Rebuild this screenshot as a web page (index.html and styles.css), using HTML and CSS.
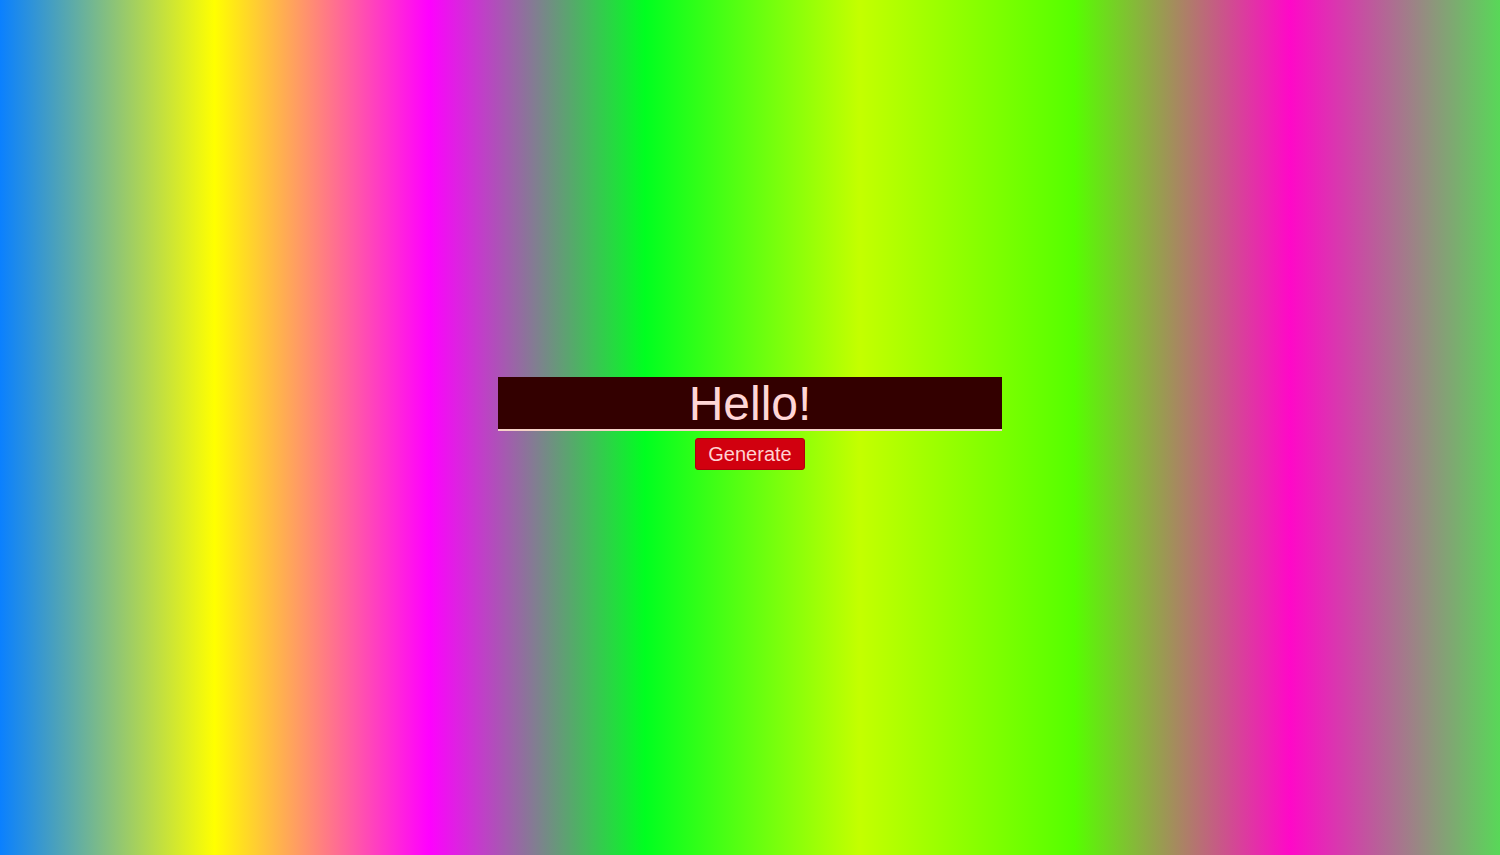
FILE: index.html
```html
<!DOCTYPE html>
<html>
<head>
<meta charset="utf-8">
<link rel="stylesheet" href="styles.css">
</head>
<body>
<main class="stage">
  <div class="panel">
    <input class="word" type="text" value="Hello!">
    <button class="generate" type="button">Generate</button>
  </div>
</main>
</body>
</html>
```
FILE: styles.css
```css
html, body {
  margin: 0;
  padding: 0;
  height: 100%;
}
body {
  font-family: "Liberation Sans", Arial, sans-serif;
  background: linear-gradient(to right,
    #0a80ff 0%,
    #ffff00 14.3%,
    #ff00ff 28.6%,
    #00ff20 43%,
    #c4ff00 57.3%,
    #55ff00 71.6%,
    #ff08c8 86%,
    #58d858 100%);
}
.stage {
  height: 100vh;
  display: flex;
  align-items: center;
  justify-content: center;
  box-sizing: border-box;
  padding-bottom: 8px;
}
.panel {
  display: flex;
  flex-direction: column;
  align-items: center;
  gap: 7px;
}
.word {
  width: 504px;
  height: 54px;
  box-sizing: border-box;
  background: #330000;
  color: #ffd6d6;
  border: none;
  border-bottom: 2px solid #f6d2c8;
  font-family: "Liberation Sans", Arial, sans-serif;
  font-size: 48px;
  text-align: center;
  padding: 0;
  outline: none;
}
.generate {
  width: 110px;
  height: 32px;
  background: #d1000f;
  color: #ffd2d2;
  border: 1px solid #b0000c;
  border-radius: 3px;
  font-family: "Liberation Sans", Arial, sans-serif;
  font-size: 20px;
  padding: 0;
}
```
